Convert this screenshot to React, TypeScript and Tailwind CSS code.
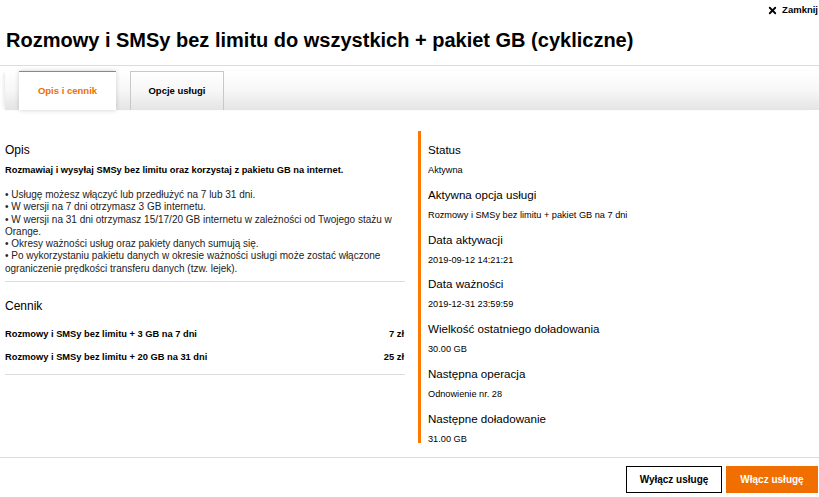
import { X } from 'lucide-react'

const details = [
  { label: 'Status', value: 'Aktywna' },
  { label: 'Aktywna opcja usługi', value: 'Rozmowy i SMSy bez limitu + pakiet GB na 7 dni' },
  { label: 'Data aktywacji', value: '2019-09-12 14:21:21' },
  { label: 'Data ważności', value: '2019-12-31 23:59:59' },
  { label: 'Wielkość ostatniego doładowania', value: '30.00 GB' },
  { label: 'Następna operacja', value: 'Odnowienie nr. 28' },
  { label: 'Następne doładowanie', value: '31.00 GB' },
]

const bullets = [
  'Usługę możesz włączyć lub przedłużyć na 7 lub 31 dni.',
  'W wersji na 7 dni otrzymasz 3 GB internetu.',
  'W wersji na 31 dni otrzymasz 15/17/20 GB internetu w zależności od Twojego stażu w Orange.',
  'Okresy ważności usług oraz pakiety danych sumują się.',
  'Po wykorzystaniu pakietu danych w okresie ważności usługi może zostać włączone ograniczenie prędkości transferu danych (tzw. lejek).',
]

const prices = [
  { name: 'Rozmowy i SMSy bez limitu + 3 GB na 7 dni', price: '7 zł' },
  { name: 'Rozmowy i SMSy bez limitu + 20 GB na 31 dni', price: '25 zł' },
]

export default function App() {
  return (
    <div className="w-[819px] h-[497px] bg-white text-black overflow-hidden font-['Liberation_Sans',Arial,sans-serif]">
      {/* Zamknij */}
      <div className="flex justify-end items-center h-[18px] pt-[2px] pr-[1px]">
        <button className="flex items-center gap-[4px] text-[9.5px] font-bold">
          <X size={11} strokeWidth={4} />
          Zamknij
        </button>
      </div>

      {/* Header */}
      <h1 className="px-[6px] pt-[11px] pb-[13px] text-[20px] leading-[23px] font-bold border-b border-[#dcdcdc]">
        Rozmowy i SMSy bez limitu do wszystkich + pakiet GB (cykliczne)
      </h1>

      {/* Tabs */}
      <div className="mt-[5px] ml-[5px] h-[39px] flex items-end bg-gradient-to-b from-white via-[#f7f7f7] to-[#e4e4e4] shadow-[-3px_0_4px_-2px_rgba(0,0,0,0.12)]">
        <div className="ml-[14px] w-[97px] h-[39px] flex items-center justify-center bg-white border-t border-[#f16e00] shadow-[0_0_5px_rgba(0,0,0,0.18)] text-[9.5px] font-bold text-[#f16e00]">
          Opis i cennik
        </div>
        <div className="ml-[14px] w-[94px] h-[39px] flex items-center justify-center border border-b-0 border-[#c8c8c8] text-[9.5px] font-bold">
          Opcje usługi
        </div>
      </div>

      {/* Content */}
      <div className="flex pt-[21px] h-[348px] border-b border-[#dcdcdc]">
        <div className="w-[400px] ml-[5px]">
          <h2 className="text-[12px] leading-[16px] mt-[11px]">Opis</h2>
          <p className="mt-[6px] text-[9.3px] leading-[12px] font-bold">
            Rozmawiaj i wysyłaj SMSy bez limitu oraz korzystaj z pakietu GB na internet.
          </p>
          <ul className="mt-[13px] text-[10px] leading-[12.3px] text-[#222]">
            {bullets.map((b) => (
              <li key={b}>• {b}</li>
            ))}
          </ul>
          <div className="mt-[6px] border-b border-[#dcdcdc]" />
          <h2 className="mt-[16px] text-[12px] leading-[16px]">Cennik</h2>
          <div className="mt-[14px] flex flex-col gap-[11px] pb-[11px] border-b border-[#dcdcdc]">
            {prices.map((p) => (
              <div key={p.name} className="flex justify-between text-[9.3px] leading-[12px] font-bold">
                <span>{p.name}</span>
                <span className="pr-[1px]">{p.price}</span>
              </div>
            ))}
          </div>
        </div>

        <div className="ml-[13px] mb-[14px] border-l-[3px] border-[#ff7900] pl-[7px] flex flex-col">
          {details.map((d) => (
            <div key={d.label} className="h-[44.8px] pt-[11px]">
              <h3 className="text-[11.6px] leading-[16px]">{d.label}</h3>
              <p className="mt-[6px] text-[9.2px] leading-[12px]">{d.value}</p>
            </div>
          ))}
        </div>
      </div>

      {/* Footer */}
      <div className="flex justify-end gap-[4px] pt-[8px] pr-[1px]">
        <button className="w-[96px] h-[27px] border border-black text-[10px] font-bold">
          Wyłącz usługę
        </button>
        <button className="w-[92px] h-[27px] bg-[#f16e00] text-white text-[10px] font-bold">
          Włącz usługę
        </button>
      </div>
    </div>
  )
}
